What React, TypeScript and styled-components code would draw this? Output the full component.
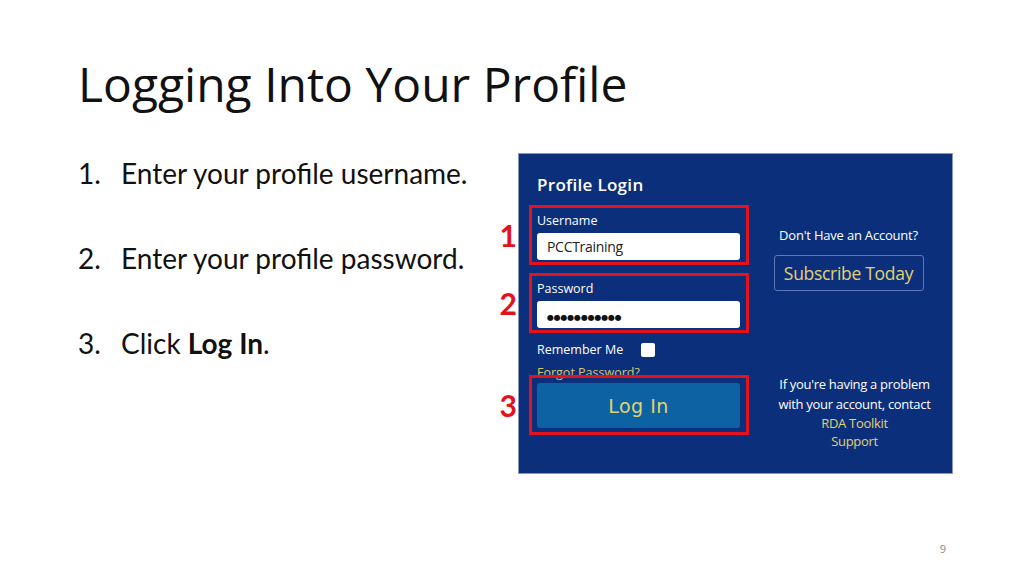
import styled, { createGlobalStyle } from "styled-components";

const GlobalStyle = createGlobalStyle`
  html, body {
    margin: 0;
    padding: 0;
    background: #ffffff;
  }
  body {
    width: 1024px;
    height: 575px;
    overflow: hidden;
  }
`;

const Slide = styled.div`
  position: relative;
  width: 1024px;
  height: 575px;
  box-sizing: border-box;
  padding: 54px 0 0 78px;
  font-family: Lato, "Liberation Sans", sans-serif;
  color: #111;
`;

const Title = styled.h1`
  margin: 0;
  font-family: "Open Sans", "Noto Sans", sans-serif;
  font-weight: 400;
  font-size: 48px;
  line-height: 60px;
  color: #111;
`;

const Body = styled.div`
  display: flex;
  margin-top: 39px;
`;

const Steps = styled.ol`
  width: 440px;
  margin: 0;
  padding: 0;
  list-style: none;
  padding-top: 4px;
`;

const Step = styled.li`
  display: flex;
  font-size: 28px;
  line-height: 32px;
  height: 85px;
`;

const StepNum = styled.span`
  width: 43px;
  flex: none;
`;

const Panel = styled.div`
  display: flex;
  width: 435px;
  height: 321px;
  box-sizing: border-box;
  padding: 0 0 0 10px;
  background: #0b2f7b;
  font-family: "Open Sans", "Noto Sans", sans-serif;
  color: #fff;
  border: 1px solid #8a97b8;
`;

const LeftCol = styled.div`
  display: flex;
  flex-direction: column;
  width: 220px;
  padding-top: 20px;
`;

const PanelTitle = styled.div`
  padding-left: 8px;
  font-size: 17px;
  line-height: 22px;
  font-weight: 600;
  letter-spacing: 0.3px;
  margin-bottom: 9px;
`;

const RedBox = styled.div`
  position: relative;
  z-index: 1;
  box-sizing: border-box;
  height: 60px;
  border: 3px solid #e4121c;
  padding: 4px 6px 0 5px;
  margin-bottom: 8px;
  display: flex;
  flex-direction: column;
`;

const Callout = styled.span`
  position: absolute;
  right: calc(100% + 15px);
  top: 50%;
  transform: translateY(-50%);
  font-family: Lato, "Liberation Sans", sans-serif;
  font-weight: 700;
  font-size: 30px;
  color: #e4121c;
`;

const FieldLabel = styled.div`
  font-size: 12.5px;
  line-height: 18px;
  margin-bottom: 3px;
`;

const Input = styled.div`
  height: 27px;
  box-sizing: border-box;
  background: #fff;
  border-radius: 3px;
  padding-left: 10px;
  color: #222;
  font-size: 14px;
  line-height: 27px;
  letter-spacing: -0.3px;
`;

const Dots = styled.span`
  font-family: "DejaVu Sans", sans-serif;
  font-size: 8px;
  letter-spacing: -0.2px;
  color: #111;
`;

const RememberRow = styled.div`
  display: flex;
  align-items: center;
  gap: 18px;
  padding-left: 8px;
  font-size: 12.5px;
  line-height: 18px;
`;

const Checkbox = styled.span`
  width: 14px;
  height: 14px;
  background: #fff;
  border-radius: 2px;
`;

const Forgot = styled.div`
  padding-left: 8px;
  font-size: 12.5px;
  line-height: 18px;
  color: #d9c66a;
  margin-top: 5px;
  margin-bottom: -7px;
`;

const LoginBox = styled(RedBox)`
  padding: 5px 6px 4px 5px;
`;

const LoginButton = styled.div`
  flex: 1;
  background: #0c62a2;
  border-radius: 3px;
  display: flex;
  align-items: center;
  justify-content: center;
  font-family: "DejaVu Sans", "Open Sans", sans-serif;
  font-size: 19px;
  letter-spacing: 0.5px;
  color: #e1d272;
`;

const RightCol = styled.div`
  flex: 1;
  display: flex;
  flex-direction: column;
  align-items: center;
  padding-top: 72px;
  padding-right: 4px;
`;

const AskText = styled.div`
  font-size: 13px;
  line-height: 18px;
  letter-spacing: -0.2px;
`;

const SubscribeButton = styled.div`
  margin-top: 11px;
  width: 150px;
  height: 36px;
  box-sizing: border-box;
  border: 1px solid #5d78b6;
  border-radius: 3px;
  display: flex;
  align-items: center;
  justify-content: center;
  font-size: 17.5px;
  letter-spacing: -0.3px;
  color: #e1d272;
`;

const HelpText = styled.div`
  margin-top: 83px;
  padding-left: 12px;
  text-align: center;
  font-size: 13px;
  line-height: 20px;
  letter-spacing: -0.3px;
`;

const HelpLink = styled.div`
  color: #e1d272;
  line-height: 18px;
`;

const PageNumber = styled.div`
  position: absolute;
  right: 78px;
  bottom: 19px;
  font-family: "Open Sans", sans-serif;
  font-size: 11px;
  color: #8a8a8a;
`;

const steps = [
  <>Enter your profile username.</>,
  <>Enter your profile password.</>,
  <>
    Click <b>Log In</b>.
  </>,
];

export default function App() {
  return (
    <>
      <GlobalStyle />
      <Slide>
        <Title>Logging Into Your Profile</Title>
        <Body>
          <Steps>
            {steps.map((text, i) => (
              <Step key={i}>
                <StepNum>{i + 1}.</StepNum>
                <span>{text}</span>
              </Step>
            ))}
          </Steps>
          <Panel>
            <LeftCol>
              <PanelTitle>Profile Login</PanelTitle>
              <RedBox>
                <Callout>1</Callout>
                <FieldLabel>Username</FieldLabel>
                <Input>PCCTraining</Input>
              </RedBox>
              <RedBox>
                <Callout>2</Callout>
                <FieldLabel>Password</FieldLabel>
                <Input>
                  <Dots>●●●●●●●●●●●</Dots>
                </Input>
              </RedBox>
              <RememberRow>
                Remember Me
                <Checkbox />
              </RememberRow>
              <Forgot>Forgot Password?</Forgot>
              <LoginBox>
                <Callout>3</Callout>
                <LoginButton>Log In</LoginButton>
              </LoginBox>
            </LeftCol>
            <RightCol>
              <AskText>Don't Have an Account?</AskText>
              <SubscribeButton>Subscribe Today</SubscribeButton>
              <HelpText>
                If you're having a problem
                <br />
                with your account, contact
                <HelpLink>
                  RDA Toolkit
                  <br />
                  Support
                </HelpLink>
              </HelpText>
            </RightCol>
          </Panel>
        </Body>
        <PageNumber>9</PageNumber>
      </Slide>
    </>
  );
}
